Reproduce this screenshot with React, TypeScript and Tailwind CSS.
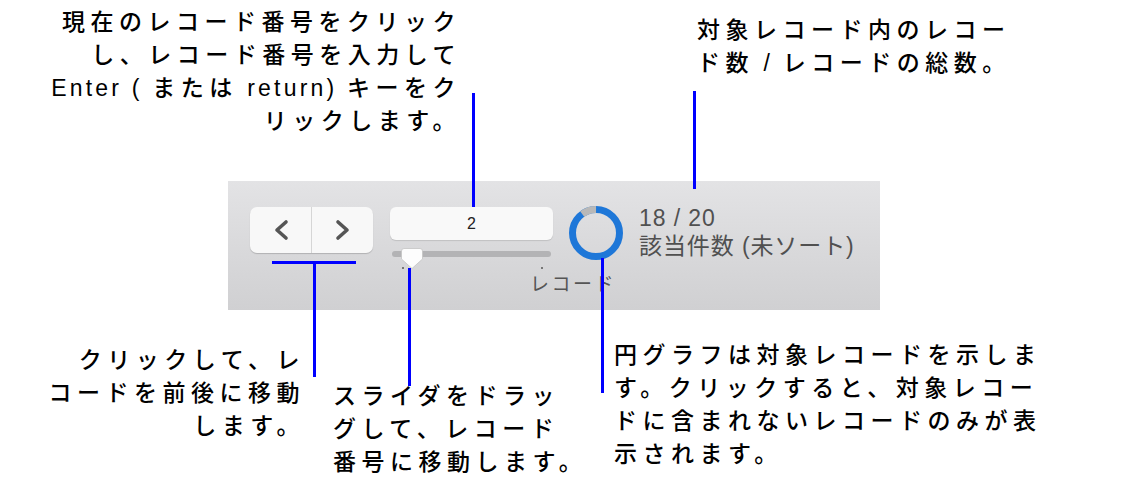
import React from 'react';

const font = "font-['Liberation_Sans','Noto_Sans_CJK_JP',sans-serif]";

function Latin({ children }: { children: React.ReactNode }) {
  return <span className="tracking-[3.2px]">{children}</span>;
}

function Note({ lines, className, align = 'left' }: { lines: React.ReactNode[]; className: string; align?: 'left' | 'right' }) {
  return (
    <div className={`absolute ${font} font-medium text-[23px] leading-[33px] tracking-[5.5px] text-black whitespace-nowrap ${align === 'right' ? 'text-right' : 'text-left'} ${className}`}>
      {lines.map((l, i) => (
        <div key={i}>{l}</div>
      ))}
    </div>
  );
}

function Pie() {
  const r = 23.5;
  const c = 2 * Math.PI * r;
  return (
    <svg width="54" height="54" viewBox="0 0 54 54">
      <circle cx="27" cy="27" r={r} fill="none" stroke="#1e77d8" strokeWidth="7" />
      <circle
        cx="27"
        cy="27"
        r={r}
        fill="none"
        stroke="#b8b8b8"
        strokeWidth="7"
        strokeDasharray={`${c * 0.1} ${c}`}
        transform="rotate(-126 27 27)"
      />
    </svg>
  );
}

function Toolbar() {
  return (
    <div className="w-[652px] h-[129px] bg-linear-to-b from-[#e3e3e5] to-[#d0d0d2] flex items-start gap-[16px] pt-[26px] pl-[22px]">
      {/* prev / next */}
      <div className="flex w-[123px] h-[46px] rounded-[7px] bg-[#f8f8f8] shadow-[0_1px_1px_rgba(0,0,0,0.18)]">
        <button className="flex-1 flex items-center justify-center border-r border-[#d6d6d6]">
          <svg width="18" height="22" viewBox="0 0 18 22">
            <polyline points="14,3 5,11 14,19" fill="none" stroke="#555" strokeWidth="3.6" strokeLinecap="round" strokeLinejoin="round" />
          </svg>
        </button>
        <button className="flex-1 flex items-center justify-center">
          <svg width="18" height="22" viewBox="0 0 18 22">
            <polyline points="4,3 13,11 4,19" fill="none" stroke="#555" strokeWidth="3.6" strokeLinecap="round" strokeLinejoin="round" />
          </svg>
        </button>
      </div>

      {/* record number + slider */}
      <div className="flex flex-col w-[163px] ml-[1px]">
        <div className="h-[33px] rounded-[6px] bg-[#f9f9f9] shadow-[0_1px_1px_rgba(0,0,0,0.12)] flex items-center justify-center font-['Liberation_Sans',sans-serif] text-[16px] text-[#222]">
          2
        </div>
        <div className="relative mt-[11px] ml-[2px] w-[159px] h-[6px] rounded-full bg-[#b3b3b5]">
          <div className="absolute left-[9px] top-[-3px]">
            <svg width="22" height="22" viewBox="0 0 22 22">
              <path d="M3 0.5 H19 Q21.5 0.5 21.5 3 V11 L11 20.5 L0.5 11 V3 Q0.5 0.5 3 0.5 Z" fill="#fdfdfd" stroke="#c4c4c4" strokeWidth="0.8" />
            </svg>
          </div>
          <div className="absolute left-[10px] top-[16px] w-[2px] h-[2px] bg-[#777]" />
          <div className="absolute left-[149px] top-[16px] w-[2px] h-[2px] bg-[#777]" />
        </div>
        <div className="mt-[15px] ml-[140px] font-['Noto_Sans_CJK_JP',sans-serif] text-[19px] leading-[22px] text-[#555] tracking-[2.5px] whitespace-nowrap">
          レコード
        </div>
      </div>

      {/* pie */}
      <div className="-mt-[1px]">
        <Pie />
      </div>

      {/* counts */}
      <div className="-mt-[3px] font-['Liberation_Sans','Noto_Sans_CJK_JP',sans-serif] text-[#505050] text-[23px] leading-[28px] tracking-[0.9px] whitespace-nowrap">
        <div>18 / 20</div>
        <div>該当件数 (未ソート)</div>
      </div>
    </div>
  );
}

export default function App() {
  return (
    <div className="relative w-[1131px] h-[502px] bg-white overflow-hidden pt-[181px] pl-[228px]">
      <Toolbar />

      {/* leader lines */}
      <div className="absolute left-[472px] top-[93px] w-[3px] h-[114px] bg-[#0000ff]" />
      <div className="absolute left-[693px] top-[91px] w-[3px] h-[98px] bg-[#0000ff]" />
      <div className="absolute left-[272px] top-[261px] w-[84px] h-[3px] bg-[#0000ff]" />
      <div className="absolute left-[313px] top-[261px] w-[3px] h-[116px] bg-[#0000ff]" />
      <div className="absolute left-[408px] top-[268px] w-[3px] h-[118px] bg-[#0000ff]" />
      <div className="absolute left-[601px] top-[258px] w-[3px] h-[135px] bg-[#0000ff]" />

      <Note
        align="right"
        className="right-[670px] top-[6px]"
        lines={[
          '現在のレコード番号をクリック',
          'し、レコード番号を入力して',
          <>
            <Latin>Enter ( </Latin>または<Latin> return) </Latin>キーをク
          </>,
          'リックします。',
        ]}
      />
      <Note className="left-[697px] top-[14px] leading-[31px]" lines={['対象レコード内のレコー', <>ド数<Latin> / </Latin>レコードの総数。</>]} />
      <Note align="right" className="right-[826px] top-[344px]" lines={['クリックして、レ', 'コードを前後に移動', 'します。']} />
      <Note className="left-[333px] top-[380px]" lines={['スライダをドラッ', 'グして、レコード', '番号に移動します。']} />
      <Note
        className="left-[614px] top-[339px]"
        lines={['円グラフは対象レコードを示しま', 'す。クリックすると、対象レコー', 'ドに含まれないレコードのみが表', '示されます。']}
      />
    </div>
  );
}
